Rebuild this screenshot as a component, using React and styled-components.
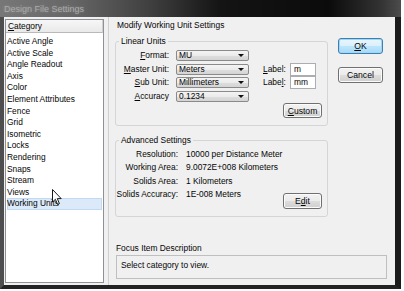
import React from 'react';
import styled, { createGlobalStyle } from 'styled-components';

const GlobalStyle = createGlobalStyle`
  html, body {
    margin: 0;
    padding: 0;
    background: #fdfdfd;
  }
  body {
    font-family: 'Liberation Sans', Arial, sans-serif;
    font-size: 8.4px;
    color: #050505;
  }
`;

const CATEGORIES = [
  'Active Angle',
  'Active Scale',
  'Angle Readout',
  'Axis',
  'Color',
  'Element Attributes',
  'Fence',
  'Grid',
  'Isometric',
  'Locks',
  'Rendering',
  'Snaps',
  'Stream',
  'Views',
  'Working Units',
];

const Window = styled.div`
  position: relative;
  width: 401px;
  height: 289px;
  display: flex;
  flex-direction: column;
  background: #262626;
`;

const TitleBar = styled.div`
  height: 17px;
  flex: none;
  display: flex;
  align-items: center;
  padding-left: 4px;
  background: linear-gradient(
    90deg,
    #777 0%,
    #666 18%,
    #3e3e3e 38%,
    #141414 55%,
    #0b0b0b 82%,
    #333 95%,
    #4c4c4c 100%
  );
  color: #a9a9a9;
  font-size: 9px;
  text-shadow: 0 0 3px rgba(255, 255, 255, 0.25);
`;

const Frame = styled.div`
  flex: 1;
  display: flex;
  border-left: 4px solid #4e4e4e;
  border-right: 6px solid #1b1b1b;
  border-bottom: 4px solid #232323;
`;

const Body = styled.div`
  flex: 1;
  display: flex;
  background: #f0f0f0;
`;

const Sidebar = styled.div`
  padding: 2px 0 0 1px;
  display: flex;
`;

const List = styled.div`
  width: 99px;
  height: 264px;
  box-sizing: border-box;
  border: 1px solid #8d9096;
  background: #fff;
  display: flex;
  flex-direction: column;
`;

const ListHeader = styled.div`
  height: 13px;
  box-sizing: border-box;
  padding-left: 2px;
  line-height: 12px;
  background: linear-gradient(#f7f7f7, #e9e9e9);
  border-bottom: 1px solid #b9b9b9;
  border-right: 1px solid #d0d0d0;
`;

const Items = styled.div`
  padding-top: 3px;
`;

const Item = styled.div`
  height: 11.6px;
  line-height: 11.6px;
  margin: 0 1px;
  white-space: nowrap;
  background: ${({ selected }) => (selected ? '#dbe9f8' : 'transparent')};
  box-shadow: ${({ selected }) => (selected ? 'inset 0 0 0 1px #c2d9f2' : 'none')};
`;

const Splitter = styled.div`
  width: 1px;
  margin-left: 4px;
  background: #cfcfcf;
`;

const Main = styled.div`
  flex: 1;
  display: flex;
  flex-direction: column;
  padding: 3px 8px 6px 6px;
`;

const TopRow = styled.div`
  display: flex;
  gap: 10px;
`;

const LeftCol = styled.div`
  width: 213px;
  display: flex;
  flex-direction: column;
`;

const Heading = styled.div`
  line-height: 11px;
  padding-left: 2px;
`;

const Group = styled.fieldset`
  margin: ${({ top }) => top}px 0 0 0;
  padding: 0 5px 7px 0;
  border: 1px solid #d2d6d9;
  border-radius: 3px;
  min-width: 0;
`;

const Legend = styled.legend`
  margin-left: 3px;
  padding: 0 2px;
  line-height: 9px;
`;

const UnitGrid = styled.div`
  margin-top: 4px;
  display: grid;
  grid-template-columns: 53px 73px 27px 26px;
  grid-auto-rows: 11px;
  column-gap: 7px;
  row-gap: 2.5px;
  align-items: center;
`;

const FieldLabel = styled.div`
  text-align: right;
  white-space: nowrap;
  line-height: 11px;
`;

const SideLabel = styled.div`
  padding-left: 7px;
  white-space: nowrap;
  line-height: 11px;
`;

const Select = styled.div`
  height: 11px;
  box-sizing: border-box;
  display: flex;
  align-items: center;
  justify-content: space-between;
  padding: 0 4px 0 2px;
  border: 1px solid #8a8a8a;
  border-radius: 2px;
  background: linear-gradient(#f4f4f4, #ebebeb 50%, #dedede 51%, #d4d4d4);
  line-height: 9px;
`;

const Arrow = styled.span`
  width: 0;
  height: 0;
  border-left: 3px solid transparent;
  border-right: 3px solid transparent;
  border-top: 3px solid #111;
`;

const TextInput = styled.div`
  height: 13px;
  box-sizing: border-box;
  padding-left: 3px;
  border: 1px solid #abadb3;
  background: #fff;
  line-height: 11px;
`;

const ButtonRow = styled.div`
  display: flex;
  justify-content: flex-end;
  margin-top: ${({ top }) => top}px;
`;

const Button = styled.div`
  width: ${({ w }) => w}px;
  height: ${({ h }) => h || 15}px;
  box-sizing: border-box;
  display: flex;
  align-items: center;
  justify-content: center;
  border: 1px solid ${({ primary }) => (primary ? '#3c7fb1' : '#707070')};
  border-radius: 3px;
  background: ${({ primary }) =>
    primary
      ? 'linear-gradient(#eaf6fd, #d9f0fc 50%, #bee6fd 51%, #a7d9f5)'
      : 'linear-gradient(#f2f2f2, #ebebeb 50%, #dddddd 51%, #cfcfcf)'};
  box-shadow: ${({ primary }) => (primary ? 'inset 0 0 0 1px #9fd5f5' : 'inset 0 0 0 1px #fbfbfb')};
  font-size: 8.6px;
`;

const AdvancedBody = styled.div`
  margin-top: 3px;
  display: flex;
  align-items: flex-end;
`;

const InfoGrid = styled.div`
  flex: 1;
  display: grid;
  grid-template-columns: 62px auto;
  grid-auto-rows: 13.5px;
  column-gap: 8px;
  align-items: center;
  margin-bottom: 7.5px;
`;

const InfoValue = styled.div`
  white-space: nowrap;
  line-height: 11px;
`;

const ButtonCol = styled.div`
  width: 45px;
  margin-top: 18px;
  display: flex;
  flex-direction: column;
  gap: 13px;
`;

const Focus = styled.div`
  margin-top: auto;
  padding-left: 1px;
`;

const FocusLabel = styled.div`
  line-height: 10px;
`;

const FocusBox = styled.div`
  margin-top: 2px;
  height: 24px;
  box-sizing: border-box;
  padding: 4px 0 0 4px;
  border: 1px solid #bfbfbf;
  line-height: 10px;
`;

const Cursor = styled.svg`
  position: absolute;
  left: 52px;
  top: 189px;
`;

const Key = ({ children }) => <u>{children}</u>;

const UNIT_ROWS = [
  { label: <><Key>F</Key>ormat:</>, value: 'MU' },
  { label: <><Key>M</Key>aster Unit:</>, value: 'Meters', side: <><Key>L</Key>abel:</>, text: 'm' },
  { label: <><Key>S</Key>ub Unit:</>, value: 'Millimeters', side: <>Labe<Key>l</Key>:</>, text: 'mm' },
  { label: <><Key>A</Key>ccuracy</>, value: '0.1234' },
];

const INFO_ROWS = [
  ['Resolution:', '10000 per Distance Meter'],
  ['Working Area:', '9.0072E+008 Kilometers'],
  ['Solids Area:', '1 Kilometers'],
  ['Solids Accuracy:', '1E-008 Meters'],
];

export default function App() {
  return (
    <Window>
      <GlobalStyle />
      <TitleBar>Design File Settings</TitleBar>
      <Frame>
        <Body>
          <Sidebar>
            <List>
              <ListHeader>
                <Key>C</Key>ategory
              </ListHeader>
              <Items>
                {CATEGORIES.map((c) => (
                  <Item key={c} selected={c === 'Working Units'}>
                    {c}
                  </Item>
                ))}
              </Items>
            </List>
          </Sidebar>
          <Splitter />
          <Main>
            <TopRow>
              <LeftCol>
                <Heading>Modify Working Unit Settings</Heading>
                <Group top={6}>
                  <Legend>Linear Units</Legend>
                  <UnitGrid>
                    {UNIT_ROWS.map((r, i) => (
                      <React.Fragment key={i}>
                        <FieldLabel>{r.label}</FieldLabel>
                        <Select>
                          <span>{r.value}</span>
                          <Arrow />
                        </Select>
                        <SideLabel>{r.side}</SideLabel>
                        {r.text ? <TextInput>{r.text}</TextInput> : <span />}
                      </React.Fragment>
                    ))}
                  </UnitGrid>
                  <ButtonRow top={1.5}>
                    <Button w={39}>
                      <Key>C</Key>ustom
                    </Button>
                  </ButtonRow>
                </Group>
                <Group top={9.5}>
                  <Legend>Advanced Settings</Legend>
                  <AdvancedBody>
                    <InfoGrid>
                      {INFO_ROWS.map(([k, v]) => (
                        <React.Fragment key={k}>
                          <FieldLabel>{k}</FieldLabel>
                          <InfoValue>{v}</InfoValue>
                        </React.Fragment>
                      ))}
                    </InfoGrid>
                    <Button w={39} h={16}>
                      E<Key>d</Key>it
                    </Button>
                  </AdvancedBody>
                </Group>
              </LeftCol>
              <ButtonCol>
                <Button w={45} h={16} primary>
                  <Key>O</Key>K
                </Button>
                <Button w={45} h={16}>
                  Cancel
                </Button>
              </ButtonCol>
            </TopRow>
            <Focus>
              <FocusLabel>Focus Item Description</FocusLabel>
              <FocusBox>Select category to view.</FocusBox>
            </Focus>
          </Main>
        </Body>
      </Frame>
      <Cursor width="11" height="17" viewBox="0 0 11 17">
        <path d="M0.5 0.5 L0.5 13 L3.4 10.3 L5.6 15.4 L7.4 14.6 L5.3 9.6 L9.2 9.6 Z" fill="#fff" stroke="#000" strokeWidth="0.9" strokeLinejoin="round" />
      </Cursor>
    </Window>
  );
}
